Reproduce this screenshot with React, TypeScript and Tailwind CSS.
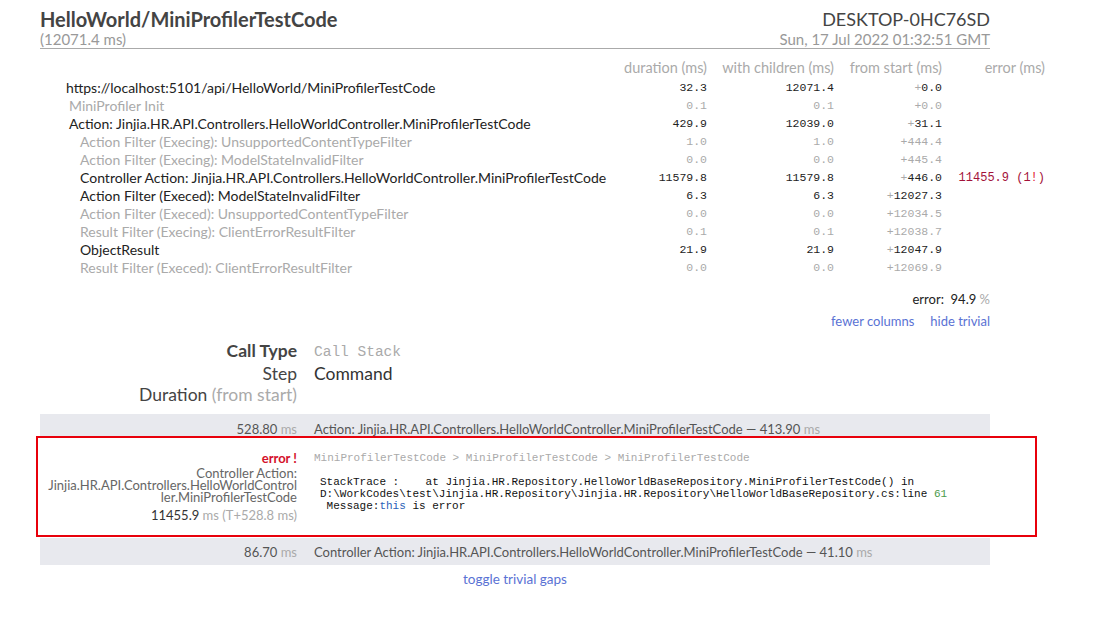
type Timing = {
  name: string
  indent: number
  duration: string
  children: string
  start: string
  error?: string
  trivial: boolean
}

const timings: Timing[] = [
  { name: 'https://localhost:5101/api/HelloWorld/MiniProfilerTestCode', indent: 26, duration: '32.3', children: '12071.4', start: '0.0', trivial: false },
  { name: 'MiniProfiler Init', indent: 29, duration: '0.1', children: '0.1', start: '0.0', trivial: true },
  { name: 'Action: Jinjia.HR.API.Controllers.HelloWorldController.MiniProfilerTestCode', indent: 29, duration: '429.9', children: '12039.0', start: '31.1', trivial: false },
  { name: 'Action Filter (Execing): UnsupportedContentTypeFilter', indent: 40, duration: '1.0', children: '1.0', start: '444.4', trivial: true },
  { name: 'Action Filter (Execing): ModelStateInvalidFilter', indent: 40, duration: '0.0', children: '0.0', start: '445.4', trivial: true },
  { name: 'Controller Action: Jinjia.HR.API.Controllers.HelloWorldController.MiniProfilerTestCode', indent: 40, duration: '11579.8', children: '11579.8', start: '446.0', error: '11455.9 (1!)', trivial: false },
  { name: 'Action Filter (Execed): ModelStateInvalidFilter', indent: 40, duration: '6.3', children: '6.3', start: '12027.3', trivial: false },
  { name: 'Action Filter (Execed): UnsupportedContentTypeFilter', indent: 40, duration: '0.0', children: '0.0', start: '12034.5', trivial: true },
  { name: 'Result Filter (Execing): ClientErrorResultFilter', indent: 40, duration: '0.1', children: '0.1', start: '12038.7', trivial: true },
  { name: 'ObjectResult', indent: 40, duration: '21.9', children: '21.9', start: '12047.9', trivial: false },
  { name: 'Result Filter (Execed): ClientErrorResultFilter', indent: 40, duration: '0.0', children: '0.0', start: '12069.9', trivial: true },
]

const sans = "font-['Lato','Open_Sans',sans-serif]"
const mono = "font-['Liberation_Mono','DejaVu_Sans_Mono',monospace]"

function TimingRow({ t }: { t: Timing }) {
  const tone = t.trivial ? 'text-[#aaa]' : 'text-[#222]'
  return (
    <div className="grid grid-cols-[575px_92px_127px_108px_103px] h-[18px] leading-[18px] items-center">
      <div className={`${tone} text-[14px] whitespace-nowrap`} style={{ paddingLeft: t.indent }}>
        {t.name}
      </div>
      <div className={`${mono} text-[11.5px] text-right ${tone}`}>{t.duration}</div>
      <div className={`${mono} text-[11.5px] text-right ${tone}`}>{t.children}</div>
      <div className={`${mono} text-[11.5px] text-right ${tone}`}>
        <span className="text-[#aaa]">+</span>
        {t.start}
      </div>
      <div className={`${mono} text-[12px] text-right text-[#a3123a]`}>
        {t.error ? (
          <>
            11455.9 (1<span className="text-[#e0102a]">!</span>)
          </>
        ) : null}
      </div>
    </div>
  )
}

export default function App() {
  return (
    <div className={`${sans} bg-white min-h-[623px] w-[1112px] overflow-hidden text-[13px] text-[#333]`}>
      <div className="ml-[40px] w-[950px]">
        {/* Header */}
        <div className="pt-[8px] flex justify-between border-b border-[#aaa]">
          <div>
            <div className="text-[20px] leading-[22px] font-bold text-[#444]">HelloWorld/MiniProfilerTestCode</div>
            <div className="text-[15px] leading-[18px] text-[#999]">(12071.4 ms)</div>
          </div>
          <div className="text-right">
            <div className="text-[18px] leading-[22px] text-[#444]">DESKTOP-0HC76SD</div>
            <div className="text-[15px] leading-[18px] text-[#999]">Sun, 17 Jul 2022 01:32:51 GMT</div>
          </div>
        </div>

        {/* Timings table */}
        <div className="mt-[10px] w-[1005px]">
          <div className="grid grid-cols-[575px_92px_127px_108px_103px] h-[18px] leading-[18px] text-[14.5px] text-[#aaa] text-right whitespace-nowrap">
            <div />
            <div>duration (ms)</div>
            <div>with children (ms)</div>
            <div>from start (ms)</div>
            <div>error (ms)</div>
          </div>
          <div className="mt-[2px]">
            {timings.map((t, i) => (
              <TimingRow key={i} t={t} />
            ))}
          </div>
        </div>

        <div className="mt-[13px] h-[18px] leading-[18px] text-right text-[#222]">
          error:&nbsp; 94.9 <span className="text-[#aaa]">%</span>
        </div>
        <div className="mt-[4px] h-[18px] leading-[18px] text-right text-[#5a72d4] flex justify-end gap-[16px]">
          <span>fewer columns</span>
          <span>hide trivial</span>
        </div>

        {/* Call type legend */}
        <div className="mt-[10px] grid grid-cols-[257px_1fr] gap-x-[17px] text-[17.5px] leading-[21px]">
          <div className="text-right font-bold text-[#444]">Call Type</div>
          <div className={`${mono} text-[14.5px] text-[#aaa] pt-[2px]`}>Call Stack</div>
          <div className="text-right text-[#444]">Step</div>
          <div className="text-[#333]">Command</div>
          <div className="text-right text-[#444]">
            Duration <span className="text-[#aaa]">(from start)</span>
          </div>
          <div />
        </div>

        {/* Gap band */}
        <div className="mt-[9px] bg-[#e8e9ee] pt-[6px] h-[24px] grid grid-cols-[257px_1fr] gap-x-[17px] leading-[18px] text-[#555]">
          <div className="text-right">
            528.80 <span className="text-[#aaa]">ms</span>
          </div>
          <div className="whitespace-nowrap">
            Action: Jinjia.HR.API.Controllers.HelloWorldController.MiniProfilerTestCode — 413.90 <span className="text-[#aaa]">ms</span>
          </div>
        </div>

        {/* Error step */}
        <div className="relative h-[100px] pt-[11px] grid grid-cols-[257px_1fr] gap-x-[17px]">
          <div className="text-right">
            <div className="leading-[18px] font-bold text-[#d4102a]">error !</div>
            <div className="text-[13px] leading-[12px] text-[#666] whitespace-nowrap">
              <div>Controller Action:</div>
              <div>Jinjia.HR.API.Controllers.HelloWorldControl</div>
              <div>ler.MiniProfilerTestCode</div>
            </div>
            <div className="mt-[3px] leading-[18px] text-[#333]">
              11455.9 <span className="text-[#aaa]">ms (T+528.8 ms)</span>
            </div>
          </div>
          <div>
            <div className={`${mono} text-[11px] leading-[18px] text-[#aaa] whitespace-nowrap`}>
              MiniProfilerTestCode &gt; MiniProfilerTestCode &gt; MiniProfilerTestCode
            </div>
            <pre className={`${mono} mt-[9px] pl-[6px] text-[11px] leading-[12px] text-[#111] whitespace-pre`}>
              {'StackTrace :    at Jinjia.HR.Repository.HelloWorldBaseRepository.MiniProfilerTestCode() in\nD:\\WorkCodes\\test\\Jinjia.HR.Repository\\Jinjia.HR.Repository\\HelloWorldBaseRepository.cs:line '}
              <span className="text-[#4a9a4a]">61</span>
              {'\n Message:'}
              <span className="text-[#2b5fb8]">this</span>
              {' is error'}
            </pre>
          </div>
          <div className="absolute left-[-4px] top-[-2px] w-[1001px] h-[101px] border-2 border-[#e8000b] pointer-events-none" />
        </div>

        {/* Gap band */}
        <div className="bg-[#e8e9ee] pt-[5px] h-[27px] grid grid-cols-[257px_1fr] gap-x-[17px] leading-[18px] text-[#555]">
          <div className="text-right">
            86.70 <span className="text-[#aaa]">ms</span>
          </div>
          <div className="whitespace-nowrap">
            Controller Action: Jinjia.HR.API.Controllers.HelloWorldController.MiniProfilerTestCode — 41.10 <span className="text-[#aaa]">ms</span>
          </div>
        </div>

        <div className="mt-[5px] leading-[18px] text-[13.5px] text-center text-[#5a72d4]">toggle trivial gaps</div>
      </div>
    </div>
  )
}
